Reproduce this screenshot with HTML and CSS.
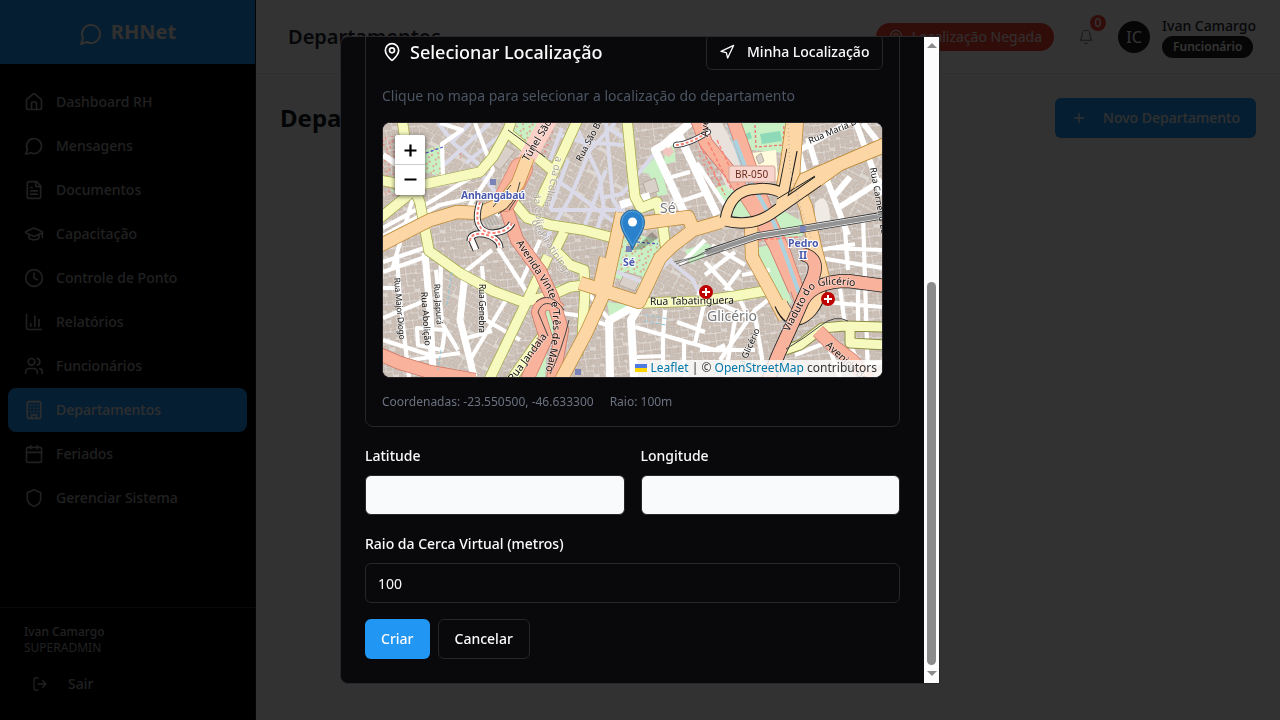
FILE: index.html
```html
<!DOCTYPE html>
<html lang="pt-BR">
<head>
<meta charset="utf-8">
<title>RHNet - Departamentos</title>
<link rel="stylesheet" href="styles.css">
</head>
<body>
<svg class="defs" width="0" height="0">
  <symbol id="chat" viewBox="0 0 24 24"><path d="M7.9 20A9 9 0 1 0 4 16.1L2 22Z"/></symbol>
  <symbol id="pin" viewBox="0 0 24 24"><path d="M20 10c0 4.99-5.54 10.19-7.4 11.8a1 1 0 0 1-1.2 0C9.54 20.19 4 14.99 4 10a8 8 0 0 1 16 0"/><circle cx="12" cy="10" r="3"/></symbol>
</svg>
<div class="app">
  <aside class="sidebar">
    <div class="brand"><svg class="icon brand-icon"><use href="#chat"/></svg><span>RHNet</span></div>
    <nav class="nav">
      <a class="nav-item"><svg class="icon" viewBox="0 0 24 24"><path d="M15 21v-8a1 1 0 0 0-1-1h-4a1 1 0 0 0-1 1v8"/><path d="M3 10a2 2 0 0 1 .71-1.53l7-6a2 2 0 0 1 2.58 0l7 6A2 2 0 0 1 21 10v9a2 2 0 0 1-2 2H5a2 2 0 0 1-2-2z"/></svg>Dashboard RH</a>
      <a class="nav-item"><svg class="icon"><use href="#chat"/></svg>Mensagens</a>
      <a class="nav-item"><svg class="icon" viewBox="0 0 24 24"><path d="M15 2H6a2 2 0 0 0-2 2v16a2 2 0 0 0 2 2h12a2 2 0 0 0 2-2V7Z"/><path d="M14 2v4a2 2 0 0 0 2 2h4M10 9H8M16 13H8M16 17H8"/></svg>Documentos</a>
      <a class="nav-item"><svg class="icon" viewBox="0 0 24 24"><path d="M21.42 10.92a1 1 0 0 0-.02-1.84L12.83 5.18a2 2 0 0 0-1.66 0L2.6 9.08a1 1 0 0 0 0 1.83l8.57 3.91a2 2 0 0 0 1.66 0zM22 10v6M6 12.5V16a6 3 0 0 0 12 0v-3.5"/></svg>Capacitação</a>
      <a class="nav-item"><svg class="icon" viewBox="0 0 24 24"><circle cx="12" cy="12" r="10"/><path d="M12 6v6l4 2"/></svg>Controle de Ponto</a>
      <a class="nav-item"><svg class="icon" viewBox="0 0 24 24"><path d="M3 3v16a2 2 0 0 0 2 2h16M18 17V9M13 17V5M8 17v-3"/></svg>Relatórios</a>
      <a class="nav-item"><svg class="icon" viewBox="0 0 24 24"><path d="M16 21v-2a4 4 0 0 0-4-4H6a4 4 0 0 0-4 4v2"/><circle cx="9" cy="7" r="4"/><path d="M22 21v-2a4 4 0 0 0-3-3.87M16 3.13a4 4 0 0 1 0 7.75"/></svg>Funcionários</a>
      <a class="nav-item active"><svg class="icon" viewBox="0 0 24 24"><rect x="4" y="2" width="16" height="20" rx="2"/><path d="M9 22v-4h6v4M8 6h.01M16 6h.01M12 6h.01M12 10h.01M12 14h.01M16 10h.01M16 14h.01M8 10h.01M8 14h.01"/></svg>Departamentos</a>
      <a class="nav-item"><svg class="icon" viewBox="0 0 24 24"><path d="M8 2v4M16 2v4M3 10h18"/><rect x="3" y="4" width="18" height="18" rx="2"/></svg>Feriados</a>
      <a class="nav-item"><svg class="icon" viewBox="0 0 24 24"><path d="M20 13c0 5-3.5 7.5-7.66 8.95a1 1 0 0 1-.67-.01C7.5 20.5 4 18 4 13V6a1 1 0 0 1 1-1c2 0 4.5-1.2 6.24-2.72a1.17 1.17 0 0 1 1.52 0C14.51 3.81 17 5 19 5a1 1 0 0 1 1 1z"/></svg>Gerenciar Sistema</a>
    </nav>
    <div class="account">
      <div class="account-name">Ivan Camargo</div>
      <div class="account-role">SUPERADMIN</div>
      <a class="logout"><svg class="icon icon-sm" viewBox="0 0 24 24"><path d="M9 21H5a2 2 0 0 1-2-2V5a2 2 0 0 1 2-2h4M16 17l5-5-5-5M21 12H9"/></svg>Sair</a>
    </div>
  </aside>
  <div class="page">
    <header class="topbar">
      <h1>Departamentos</h1>
      <div class="topbar-right">
        <div class="denied"><svg class="icon icon-sm"><use href="#pin"/></svg>Localização Negada</div>
        <div class="bell"><svg class="icon icon-sm" viewBox="0 0 24 24"><path d="M6 8a6 6 0 0 1 12 0c0 7 3 9 3 9H3s3-2 3-9M10.3 21a1.94 1.94 0 0 0 3.4 0"/></svg><span class="count">0</span></div>
        <div class="user"><div class="avatar">IC</div><div class="user-text"><span class="user-name">Ivan Camargo</span><span class="role">Funcionário</span></div></div>
      </div>
    </header>
    <main class="main">
      <h2>Departamentos</h2>
      <button class="btn primary new"><svg class="icon icon-sm" viewBox="0 0 24 24"><path d="M5 12h14M12 5v14"/></svg>Novo Departamento</button>
    </main>
  </div>
</div>
<div class="overlay">
  <div class="modal">
    <div class="modal-view"><div class="modal-body">
      <section class="card">
        <div class="card-head">
          <h3><svg class="icon"><use href="#pin"/></svg>Selecionar Localização</h3>
          <button class="btn outline locate"><svg class="icon icon-sm" viewBox="0 0 24 24"><path d="M3 11l19-9-9 19-2-8-8-2z"/></svg>Minha Localização</button>
        </div>
        <p class="hint">Clique no mapa para selecionar a localização do departamento</p>
        <div class="map">
          <svg class="tiles" viewBox="383 123 499 254">
            <defs>
              <pattern id="b1" width="46" height="38" patternUnits="userSpaceOnUse" patternTransform="rotate(-8) scale(.72)">
                <rect width="46" height="38" fill="#ddd6d1"/>
                <path fill="#cdc0b6" stroke="#b3a599" stroke-width=".7" d="M1 1h5v8H1zM7 1h4v6H7zM12 2h6v9h-6zM20 1h4v7h-4zM25 1h5v10h-5zM32 2h4v6h-4zM37 1h7v7h-7zM1 11h7v4H1zM10 13h5v8h-5zM17 13h6v5h-6zM25 13h4v9h-4zM31 10h6v8h-6zM39 10h5v5h-5zM1 18h6v7H1zM17 20h5v6h-5zM31 20h8v4h-8zM41 17h4v8h-4zM1 28h4v8H1zM7 27h5v9H7zM14 28h8v4h-8zM15 34h6v3h-6zM24 25h5v11h-5zM31 27h4v8h-4zM37 28h7v8h-7z"/>
              </pattern>
              <pattern id="b2" width="38" height="31" patternUnits="userSpaceOnUse" patternTransform="rotate(28) scale(.8)">
                <rect width="38" height="31" fill="#ded8d3"/>
                <path fill="#cfc3b9" stroke="#b4a69b" stroke-width=".7" d="M1 1h8v5H1zM11 1h4v7h-4zM17 1h9v5h-9zM28 1h8v8h-8zM1 8h4v7H1zM7 10h8v4H7zM17 8h5v9h-5zM24 8h3v9h-3zM29 11h7v4h-7zM1 17h7v5H1zM10 17h5v12h-5zM17 19h8v4h-8zM28 17h4v9h-4zM33 17h4v9h-4zM1 24h7v5H1zM17 25h8v4h-8z"/>
              </pattern>
              <pattern id="dots" width="7" height="7" patternUnits="userSpaceOnUse" patternTransform="rotate(20)"><path d="M1 1h2M4 4v2" stroke="#f36b63" stroke-width="1.1"/></pattern>
              <path id="maio" d="M516 243L547 290Q560 318 545 374"/>
              <path id="viad" d="M789 332L809 294Q816 280 860 287L880 289"/>
            </defs>
            <rect x="383" y="123" width="499" height="254" fill="url(#b1)"/>
            <path fill="url(#b2)" d="M420 123H630V205L560 230 500 170 420 180ZM440 270L545 300 500 377H440ZM670 220L760 235 735 300 650 290ZM820 160L882 150V210L815 225Z"/>
            <!-- parks, squares and pitches -->
            <g fill="#c8f0c4">
              <path d="M425 150L443 144 441 176 424 172ZM515 123H545L532 150 514 138ZM640 172L657 155 668 194 658 196 649 174ZM665 142L673 139 676 161 664 165ZM740 123H786V153L752 150ZM715 187L730 184 742 207 728 218ZM754 213L778 208 805 223 802 236 763 238ZM614 248L630 233 660 240 665 252 642 290 610 275ZM757 248L768 245 792 302 780 308ZM607 302L632 305 610 320ZM425 183L397 195 390 190ZM548 290L560 284 552 340 545 330ZM685 250L708 243 715 252 690 264ZM527 377L547 350 545 377ZM733 205L745 192 768 205 764 216 733 217Z"/>
            </g>
            <path fill="#fffbdc" d="M751 153L776 150 778 180 760 186Z"/>
            <path fill="#8ed9b7" d="M760 134l20-3 2 10-20 3zM745 134l5-2 2 6-4 2z"/>
            <path fill="#e9e2dc" d="M697 123H722L752 185 728 190Z"/>
            <path fill="url(#dots)" d="M425 150L443 144 441 176 424 172ZM446 154l14-3 2 7-14 4zM515 123H545L532 150 514 138ZM618 248L630 235 660 240 662 252 642 275 614 270ZM383 136h14v60h-14zM695 145L714 143 724 186 712 190ZM535 123h20l-10 50-12-10z"/>
            <path fill="none" stroke="#f3716b" stroke-width="1.3" stroke-dasharray="3 2" d="M755 125l1 22 27-2 1-20"/>
            <path fill="#d9d0c9" stroke="#b8aa9e" d="M606 252L616 258 605 280 600 276ZM625 272L642 277 635 291 619 285ZM496 140L515 151 500 170 490 162ZM643 183l12-5 4 13-12 4zM756 157l5-4 3 8-5 3z"/>
            <path fill="#f1c6bf" d="M663 148l7-3 4 7-5 5-6-3z"/>
            <path fill="#efeae4" d="M815 203q10-12 14 6l2 15-16 2z"/>
            <path fill="none" stroke="#aad3df" stroke-width="6" d="M728 119L748 180 773 222 788 250 799 292"/>
            <!-- pedestrian streets -->
            <g fill="none" stroke="#dadae8" stroke-width="4" stroke-linejoin="round">
              <path d="M438 123L452 141M490 123L444 165M470 123L452 142 488 172M516 123L466 163M562 128L550 160M560 135L582 142 625 145M578 130L600 178 604 210 597 229M606 123L613 200 620 210M548 173L618 225M550 210L625 210M627 140L608 128M655 153L622 194 600 198M568 160L550 210M545 240L570 198 590 150 615 123M583 230L606 170M600 265L642 282M663 255L693 280 700 295M672 258L652 278M480 172L505 205"/>
            </g>
            <!-- local streets -->
            <g fill="none" stroke="#fff" stroke-width="4.200" stroke-linejoin="round">
              <path d="M383 228L430 202 480 172M383 236L408 222 440 205 480 196M413 198L392 270M383 262L424 248 432 215M443 177L442 144 462 130 440 123M475 123L493 170 470 205 500 215M383 272L428 256M424 254L434 372M397 258L400 300 409 377M383 318L422 302M383 340L430 355M441 262L440 320 458 350M383 288L400 288"/>
              <path stroke-width="7" d="M465 273L460 320 470 360 474 377M425 253L430 310 433 377"/>
              <path d="M462 274L492 250M482 266L486 320 520 340M506 300L470 360M467 338L492 331M436 270L442 320M417 328L445 330 442 350 418 345ZM410 360L460 353M498 248L526 291M540 240L520 285"/>
              <path stroke-width="8" d="M690 123L662 146 655 150 690 225M679 135L717 215M609 320L610 377M640 305L631 320 634 377M610 320L640 303M620 205L650 196"/>
              <path d="M667 147L690 125M668 178L690 172M676 203L708 192M697 163L730 213M555 312L582 316 609 326M582 285L609 320M635 327L715 350 725 345M663 337V377M637 357L665 356M665 310L663 337M684 343V377M697 293L755 320M705 262L740 300 750 320M705 300L695 343M735 252L705 275M745 265L712 245M720 360L755 310 768 300M755 315L765 377M677 322L705 332M680 265L705 240M700 350L755 350M735 320L725 377"/>
              <path stroke-width="6" d="M798 148L808 187M808 138L816 165M856 123L875 175 882 195M827 180L848 235M798 151L835 130 860 116M838 208L882 180M835 195L850 177M863 123L882 147M383 155L398 165 405 190"/>
              <path d="M828 248L882 250M845 230L848 270M863 215L868 377M820 258L882 268M825 302L882 307M840 288L845 325M795 355L825 343M830 350L840 377M858 290V330M820 250L855 244M850 345L860 365 882 362M740 270L725 290M770 270L742 275"/>
            </g>
            <!-- secondary roads -->
            <g fill="none" stroke="#a5a94c" stroke-width="11" stroke-linejoin="round">
              <path d="M402 119L411 180 420 203 429 251 460 273 493 291 523 302 550 296 570 287 586 285M379 180L400 184 425 184 480 172 493 157 508 130 512 119M508 133L552 170M578 119L550 180 538 205M379 219L412 192M505 192L527 218 550 225 583 230 610 237M564 232L555 250 570 265 584 270 585 290 582 340 577 355M548 256L527 301 489 380M627 119L632 170 635 197 641 208 657 202 662 220 666 250M511 380L545 332M643 303L700 301 735 296 765 291"/>
            </g>
            <g fill="none" stroke="#f7fabf" stroke-width="9.500" stroke-linejoin="round">
              <path d="M402 119L411 180 420 203 429 251 460 273 493 291 523 302 550 296 570 287 586 285M379 180L400 184 425 184 480 172 493 157 508 130 512 119M508 133L552 170M578 119L550 180 538 205M379 219L412 192M505 192L527 218 550 225 583 230 610 237M564 232L555 250 570 265 584 270 585 290 582 340 577 355M548 256L527 301 489 380M627 119L632 170 635 197 641 208 657 202 662 220 666 250M511 380L545 332M643 303L700 301 735 296 765 291"/>
            </g>
            <g fill="none" stroke-linejoin="round">
              <path stroke="#8b8d46" stroke-width="11" d="M785 350L800 345 822 328 845 326 886 327M850 329L850 343 886 345"/><path stroke="#f7fabf" stroke-width="9" d="M785 350L800 345 822 328 845 326 886 327M850 329L850 343 886 345"/>
            </g>
            <!-- trunk roads -->
            <g fill="none" stroke-linejoin="round">
              <path stroke="#cf7767" stroke-width="14" d="M697 119L706 143 730 172 757 213 775 245 795 290M733 119L752 173 770 222 784 252 798 292 806 315M379 354L400 363 430 372 475 380M505 205L517 240 540 271 552 297 562 330 553 380M560 310Q544 296 538 312L546 338 527 380M818 331L832 345 852 360 868 380"/>
              <path stroke="#f9b29c" stroke-width="12.500" d="M697 119L706 143 730 172 757 213 775 245 795 290M733 119L752 173 770 222 784 252 798 292 806 315M379 354L400 363 430 372 475 380M505 205L517 240 540 271 552 297 562 330 553 380M560 310Q544 296 538 312L546 338 527 380M818 331L832 345 852 360 868 380"/>
              <path stroke="#fcd0c6" stroke-width="17" d="M550 117L525 162"/>
              <path stroke="#e18e79" stroke-width="24" stroke-linecap="round" d="M521 169L505 200"/><path stroke="#f9b29c" stroke-width="22" stroke-linecap="round" d="M521 169L505 200"/>
              <path stroke="#aad3df" stroke-width="4" d="M735 140L750 180 774 223 799 293"/>
            </g>
            <!-- primary roads -->
            <g fill="none" stroke-linejoin="round">
              <path stroke="#bd8a38" stroke-width="14" d="M379 246L430 220 457 212 480 213 503 203 518 183 528 157M561 380L587 331 605 291 622 213M580 283L605 291 639 302 660 258 672 246 693 230 720 222M643 223L688 217 694 231M600 285L606 258M782 193L787 163 793 119M751 223L752 257 770 290 785 318M797 119L793 177 806 207 815 247 823 278"/>
              <path stroke="#fcd6a4" stroke-width="12.500" d="M379 246L430 220 457 212 480 213 503 203 518 183 528 157M561 380L587 331 605 291 622 213M580 283L605 291 639 302 660 258 672 246 693 230 724 221M643 223L688 217 694 231M600 285L606 258M782 193L787 163 793 119M751 223L752 257 770 290 785 318M797 119L793 177 806 207 815 247 823 278"/>
              <path fill="#fcd6a4" stroke="#bd8a38" d="M800 174L885 137V153L843 170 808 195 785 205Z"/>
              <path stroke="#222" stroke-width="11.500" d="M725 221C728 200 740 189 757 189Q772 187 784 194M723 220Q750 228 771 214L818 181M783 195L792 150"/>
              <path stroke="#fcd6a4" stroke-width="9.500" d="M718 223L725 221C728 200 740 189 757 189Q772 187 786 195M721 220Q750 228 771 214L824 177M780 208L783 195L793 144"/>
              <path stroke="#222" stroke-width="1" d="M777 199L815 176"/>
              <path stroke="#222" stroke-width="14" d="M781 304Q790 326 805 315T821 280"/><path stroke="#fcd6a4" stroke-width="12.500" d="M780 301Q790 326 805 315T821 276"/>
              <path stroke="#222" stroke-width="14" d="M768 380L779 353 795 318 813 277Q820 258 802 254M803 300Q814 281 848 281L886 286"/>
              <path stroke="#f9b29c" stroke-width="12.500" d="M768 380L779 353 795 318 813 277Q820 258 802 254M803 300Q814 281 848 281L886 286"/>
              <path stroke="#444" stroke-width="1" d="M786 349Q805 338 820 326T848 321M560 310Q544 296 538 312L548 336M569 320Q562 350 550 374M536 302Q550 290 564 310M519 195L509 210M511 185L493 207M498 214Q516 205 520 182M508 130L545 157"/>
            </g>
            <!-- footways round the station -->
            <g fill="none">
              <path stroke="#aaa" stroke-width="11" stroke-dasharray="1 2" d="M485 224L498 218"/>
              <path stroke="#333" stroke-width="7" d="M480 202C474 220 478 232 492 233Q508 232 512 223M470 241C470 228 500 234 500 248M470 236L476 250"/>
              <path stroke="#fff" stroke-width="5" d="M480 202C474 220 478 232 492 233Q508 232 512 223M470 241C470 228 500 234 500 248M470 236L476 250"/>
              <path stroke="#fa8072" stroke-width="2" stroke-dasharray="3 2" d="M480 202C474 220 478 232 492 233Q508 232 512 223M470 241C470 228 500 234 500 248"/>
              <path stroke="#333" stroke-width="6" stroke-linecap="round" d="M676 145Q690 144 708 132"/><path stroke="#fff" stroke-width="4.500" stroke-linecap="round" d="M676 145Q690 144 708 132"/><path stroke="#fa8072" stroke-width="2" stroke-dasharray="3 2" d="M676 145Q690 144 708 132"/>
              <path stroke="#fa8072" stroke-width="1.400" stroke-dasharray="4 2" d="M758 240L800 237M700 145L725 195M708 142L732 190M717 140L738 185"/>
              <path stroke="#4a55d0" stroke-width="1.200" stroke-dasharray="3 2" d="M426 153L443 147M637 242L658 244"/>
              <path stroke="#bbb2a8" stroke-width="1.200" stroke-dasharray="1 3" d="M788 120L790 170 803 215 816 252"/>
              <path stroke="#8fc8dc" stroke-dasharray="4 2" d="M452 272L447 305M441 350L438 370M645 315L668 319M644 321L666 325"/>
            </g>
            <!-- railway -->
            <g fill="none">
              <path stroke="#333" stroke-width="7.500" d="M706 253L758 236 802 229 886 215"/><path stroke="#eee" stroke-width="6" d="M704 254L758 236 802 229 886 215"/><path stroke="#949494" stroke-width="4.400" d="M706 253L758 236 802 229 886 215"/><path stroke="#555" stroke-width=".8" d="M674 262L695 257 716 246M679 266L702 258 724 250M676 264L706 253"/>
            </g>
            <g fill="#7b84b8"><path d="M490 179h6v6h-6zM575 369h6v6h-6zM800 226h6v6h-6zM626 246h6v6h-6z"/></g>
            <!-- labels -->
            <g class="street">
              <text transform="translate(528 162) rotate(-59)">Túnel São João</text>
              <text class="s9" transform="translate(581 162) rotate(-62)">Rua São Bento</text>
              <text transform="translate(708 137) rotate(-87)">Avenida do Estado</text>
              <text class="s9" transform="translate(810 144) rotate(-23)">Rua Maria Domitila</text>
              <text class="s9" transform="translate(870 168) rotate(80)">Rua Carneiro Leão</text>
              <text class="s8" textLength="62" transform="translate(394 278) rotate(85)">Rua Major Diogo</text>
              <text class="s9" textLength="54" transform="translate(421 292) rotate(86)">Rua Abolição</text>
              <text class="s8" textLength="41" transform="translate(434 284) rotate(86)">Rua Japurá</text>
              <text class="s8" textLength="49" transform="translate(479 284) rotate(90)">Rua Genebra</text>
              <text textLength="139"><textPath href="#maio">Avenida Vinte e Três de Maio</textPath></text>
              <text transform="translate(513 382) rotate(-53)">Rua Jandaia</text>
              <text transform="translate(650 305) rotate(-1)" textLength="84">Rua Tabatinguera</text>
              <text><textPath href="#viad">Viaduto do Glicério</textPath></text>
              <text class="s9" transform="translate(744 366) rotate(-66)">a Glicério</text>
              <text transform="translate(825 346) rotate(43)">Avenida do Estado</text>
              <text class="tunnel" transform="translate(556 156) rotate(103)">a da Colina</text>
              <text class="tunnel" transform="translate(533 193) rotate(83)">da Colina</text>
              <text class="tunnel" transform="translate(531 222) rotate(57)">de Piratininga</text>
              <text class="tunnel" x="641" y="378">Rua dos Estudantes</text>
            </g>
            <g class="place"><text x="660" y="213">Sé</text><text x="707" y="321" textLength="50">Glicério</text></g>
            <g class="station"><text x="461" y="199" textLength="64">Anhangabaú</text><text x="623" y="266">Sé</text><text x="788" y="247">Pedro</text><text x="799" y="259">II</text></g>
            <rect x="729" y="166" width="46" height="16" rx="2" fill="#f8d5cc" stroke="#d4a49a"/><text class="shield" x="735" y="178">BR-050</text>
            <g><circle cx="706" cy="292" r="7" fill="#bf0000"/><circle cx="828" cy="299" r="7" fill="#bf0000"/><path stroke="#fff" stroke-width="2" d="M702 292h8M706 288v8M824 299h8M828 295v8"/></g>
            <!-- marker -->
            <path fill="#000" opacity=".25" d="M633 250L652 232 658 238 642 249Z"/>
            <path fill="#2a81cb" stroke="#2e6c97" d="M632.500 250C630 242 620.500 232 620.500 222a12 12 0 0 1 24 0C644.500 232 635 242 632.500 250Z"/><path fill="none" stroke="#5ba4dc" d="M632.500 246C630 239 621.800 231 621.800 222a10.700 10.700 0 0 1 21.400 0C643.200 231 635 239 632.500 246Z"/><circle cx="632.500" cy="222" r="4.500" fill="#fff"/>
          </svg>
          <div class="zoom"><span><svg viewBox="0 0 30 30"><path d="M9.500 15.500h12M15.500 9.500v12"/></svg></span><span><svg viewBox="0 0 30 30"><path d="M9.500 14.500h12"/></svg></span></div>
          <div class="credit"><svg class="flag" viewBox="0 0 12 8"><path fill="#4c7be1" d="M0 0h12v4H0z"/><path fill="#ffd500" d="M0 4h12v4H0z"/></svg><a>Leaflet</a> | © <a>OpenStreetMap</a> contributors</div>
        </div>
        <div class="coords"><span>Coordenadas: -23.550500, -46.633300</span><span>Raio: 100m</span></div>
      </section>
      <div class="two">
        <div class="field"><label>Latitude</label><div class="input filled"></div></div>
        <div class="field"><label>Longitude</label><div class="input filled"></div></div>
      </div>
      <div class="field"><label>Raio da Cerca Virtual (metros)</label><div class="input">100</div></div>
      <div class="actions"><button class="btn primary">Criar</button><button class="btn outline">Cancelar</button></div>
    </div></div>
    <div class="scroll"><i class="arrow up"></i><i class="thumb"></i><i class="arrow down"></i></div>
  </div>
</div>
</body>
</html>
```
FILE: styles.css
```css
* { box-sizing: border-box; }
body { margin: 0; height: 720px; overflow: hidden; font: 14px/20px "Noto Sans", sans-serif; color: #1e2530; }
h1, h2, h3, p { margin: 0; }
.defs { position: absolute; }
.icon { width: 20px; height: 20px; flex: none; fill: none; stroke: currentColor; stroke-width: 2; stroke-linecap: round; stroke-linejoin: round; }
.icon-sm { width: 16px; height: 16px; }
.app { display: flex; height: 720px; }
.sidebar { width: 256px; display: flex; flex-direction: column; background: #000; border-right: 1px solid #1b1b1b; color: #a0a0a5; }
.brand { height: 64px; display: flex; align-items: center; justify-content: center; gap: 8px; background: #2196f3; color: #f2eee9; font-size: 20px; font-weight: 700; }
.brand-icon { width: 24px; height: 24px; margin-top: 4px; }
.nav { flex: 1; padding: 16px 8px; }
.nav-item { height: 44px; display: flex; align-items: center; gap: 12px; padding: 0 16px; border-radius: 8px; font-weight: 500; }
.nav-item.active { background: #2196f3; color: #e6e6e6; }
.account { height: 113px; padding: 16px 24px; border-top: 1px solid #2e2e2e; font-size: 12px; line-height: 16px; }
.account-name { font-weight: 500; }
.logout { display: flex; align-items: center; gap: 20px; padding: 18px 8px 0; font-size: 14px; line-height: 20px; font-weight: 500; }
.page { flex: 1; background: #fafafa; }
.topbar { height: 74px; padding: 0 24px 0 32px; display: flex; align-items: center; justify-content: space-between; background: #fff; border-bottom: 1px solid #ebebeb; }
.topbar h1 { font-size: 20px; line-height: 28px; font-weight: 600; }
.topbar-right { display: flex; align-items: center; gap: 24px; }
.denied { height: 28px; padding: 0 12px; display: flex; align-items: center; gap: 8px; border-radius: 14px; background: #f44336; color: #f5e6e4; }
.bell { position: relative; height: 16px; color: #777; }
.bell .icon { stroke-width: 1.6; }
.count { position: absolute; left: 12px; top: -14px; width: 16px; height: 16px; border-radius: 8px; background: #f44336; color: #fff; font-size: 12px; line-height: 16px; text-align: center; font-weight: 500; }
.user { display: flex; align-items: center; gap: 12px; }
.avatar { width: 32px; height: 32px; border-radius: 16px; background: #202020; color: #fff; font-size: 16px; line-height: 32px; text-align: center; }
.user-text { display: flex; flex-direction: column; align-items: flex-start; padding-top: 4px; }
.user-name { font-weight: 500; line-height: 20px; margin-top: -4px; }
.role { height: 22px; padding: 0 11px; border-radius: 11px; background: #202020; color: #fff; font-size: 12px; line-height: 22px; font-weight: 600; }
.main { padding: 24px; display: flex; align-items: center; justify-content: space-between; }
.main h2 { font-size: 24px; line-height: 32px; font-weight: 700; color: #10151c; }
.btn { height: 40px; padding: 0 16px; display: flex; align-items: center; border: 0; border-radius: 6px; font: 500 14px/20px "Noto Sans", sans-serif; color: #fafafa; white-space: nowrap; }
.primary { background: #2196f3; }
.outline { background: #09090b; border: 1px solid #27272a; }
.new { gap: 16px; color: #f0f0f0; }
.overlay { position: fixed; inset: 0; display: flex; align-items: center; justify-content: center; background: rgba(0,0,0,.8); }
.modal { width: 600px; height: 648px; display: flex; background: #09090b; border: 1px solid #27272a; border-radius: 8px 0 0 8px; }
.modal-view { flex: 1; overflow: hidden; border-radius: 7px 0 0 7px; }
.modal-body { margin-top: -20px; padding: 0 24px; display: flex; flex-direction: column; gap: 16px; color: #fafafa; }
.card { border: 1px solid #27272a; border-radius: 8px; padding: 16px; height: 410px; display: flex; flex-direction: column; gap: 16px; }
.card-head { height: 36px; display: flex; align-items: center; justify-content: space-between; }
.card-head h3 { display: flex; align-items: center; gap: 8px; font-size: 18px; line-height: 28px; font-weight: 500; }
.locate { height: 36px; gap: 13px; padding: 0 12px; }
.locate .icon { margin-right: -1px; }
.locate { padding-right: 12px; min-width: 177px; gap: 13px; }
.hint { color: #4b5563; }
.map { position: relative; height: 256px; border: 1px solid #27272a; border-radius: 8px; overflow: hidden; background: #ddd; flex: none; }
.tiles { display: block; width: 499px; height: 254px; }
.street { font-size: 10.3px; fill: #111; stroke: #fff; stroke-opacity: .45; stroke-width: 1.5px; paint-order: stroke; }
.s9 { font-size: 9px; }
.s8 { font-size: 8.5px; }
.tunnel { font-size: 10px; fill: #aaa49e; }
.place { font-size: 14px; fill: #777; stroke: #fff; stroke-width: 2.5px; paint-order: stroke; }
.station { font-size: 10.5px; font-weight: 700; fill: #4a59ad; stroke: #fff; stroke-width: 2px; paint-order: stroke; }
.shield { font-size: 10px; fill: #6c2a20; }
.zoom { position: absolute; left: 12px; top: 12px; width: 30px; background: #fff; border-radius: 2px; box-shadow: 0 1px 5px rgba(0,0,0,.65); }
.zoom span { display: block; height: 30px; }
.zoom span:first-child { border-bottom: 1px solid #ccc; }
.zoom svg { display: block; width: 30px; height: 30px; stroke: #000; stroke-width: 2.2; }
.credit { position: absolute; right: 0; bottom: 0; height: 17px; padding: 0 5px 0 4px; background: rgba(255,255,255,.8); color: #333; font-size: 12px; line-height: 16px; white-space: nowrap; }
.credit a { color: #0078a8; }
.flag { width: 12px; height: 8px; margin-right: 3px; }
.coords { display: flex; gap: 16px; font-size: 12px; line-height: 16px; color: #6b7280; }
.two { display: grid; grid-template-columns: 1fr 1fr; gap: 16px; }
.field label { display: block; height: 24px; margin-bottom: 8px; line-height: 26px; font-weight: 500; }
.input { height: 40px; padding: 0 12px; border: 1px solid #27272a; border-radius: 6px; line-height: 40px; }
.filled { background: #f9fafc; }
.actions { display: flex; gap: 8px; }
.scroll { width: 15px; background: #fcfcfc; display: flex; flex-direction: column; align-items: center; }
.arrow { width: 0; height: 0; border: 5px solid transparent; }
.up { border-bottom-color: #8b8b8b; border-top: 0; margin-top: 6px; }
.down { border-top-color: #8b8b8b; border-bottom: 0; margin-top: 6px; }
.thumb { width: 9px; height: 383px; margin-top: 234px; border-radius: 5px; background: #8b8b8b; }
```
